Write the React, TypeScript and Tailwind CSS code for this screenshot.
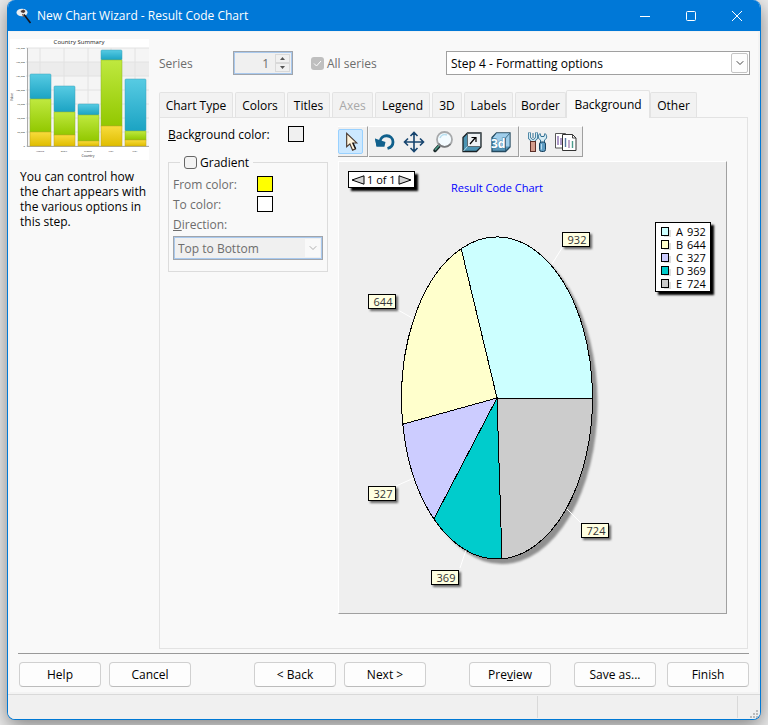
import React from "react";
import { ChevronDown } from "lucide-react";

const slices = [
  { name: "A", value: 932, color: "#ccffff", box: [223, 70], line: [223, 86, 213, 102] },
  { name: "B", value: 644, color: "#ffffcc", box: [29, 132], line: [59, 148, 75, 157] },
  { name: "C", value: 327, color: "#ccccff", box: [29, 324], line: [57, 324, 75, 316] },
  { name: "D", value: 369, color: "#00cccc", box: [92, 408], line: [121, 406, 127, 388] },
  { name: "E", value: 724, color: "#cccccc", box: [242, 361], line: [242, 361, 228, 347] },
];

const CX = 158;
const CY = 236;
const RX = 95.5;
const RY = 161;

function Pie() {
  const total = slices.reduce((sum, s) => sum + s.value, 0);
  const at = (n: number) => {
    const a = (n / total) * Math.PI * 2;
    return `${(CX + RX * Math.cos(a)).toFixed(1)} ${(CY - RY * Math.sin(a)).toFixed(1)}`;
  };
  let run = 0;
  return (
    <svg viewBox="0 0 387 451" className="block h-full w-full" role="img" aria-label="Result Code Chart">
      <defs>
        <filter id="soft" x="-20%" y="-20%" width="150%" height="150%">
          <feGaussianBlur stdDeviation="1" />
        </filter>
      </defs>
      <ellipse cx={CX + 5} cy={CY + 5} rx={RX} ry={RY} fill="#909090" filter="url(#soft)" />
      {slices.map((s) => {
        const from = at(run);
        run += s.value;
        return (
          <path
            key={s.name}
            d={`M${CX} ${CY} L${from} A${RX} ${RY} 0 0 0 ${at(run)} Z`}
            fill={s.color}
            stroke="#000"
            strokeWidth="1"
            shapeRendering="crispEdges"
          />
        );
      })}
      {slices.map((s) => (
        <g key={s.name}>
          <line x1={s.line[0]} y1={s.line[1]} x2={s.line[2]} y2={s.line[3]} stroke="#fff" />
          <rect x={s.box[0] + 2} y={s.box[1] + 2} width="28" height="15" fill="#666" filter="url(#soft)" />
          <rect x={s.box[0] + 0.5} y={s.box[1] + 0.5} width="27" height="14" fill="#ffffe1" stroke="#000" />
          <text x={s.box[0] + 15} y={s.box[1] + 12} textAnchor="middle" fontSize="11" fill="#333">
            {s.value}
          </text>
        </g>
      ))}
    </svg>
  );
}

const previewBars = [
  { x: 30, top: 35, mid: 60, low: 93, label: "Austria" },
  { x: 54, top: 47, mid: 73, low: 96, label: "Brazil" },
  { x: 78, top: 65, mid: 76, low: 102, label: "France" },
  { x: 101, top: 11, mid: 21, low: 87, label: "Italy" },
  { x: 125, top: 40, mid: 92, low: 101, label: "USA" },
];
const previewTicks = ["175,000", "150,000", "125,000", "100,000", "75,000", "50,000", "25,000", "0"];

function Preview() {
  return (
    <svg viewBox="0 0 139 121" className="block h-[121px] w-[139px]" role="img" aria-label="Country Summary">
      <defs>
        <linearGradient id="blue" x2="0" y2="1"><stop stopColor="#57cbe3" /><stop offset="1" stopColor="#1ba3c3" /></linearGradient>
        <linearGradient id="green" x2="0" y2="1"><stop stopColor="#bfe93f" /><stop offset="1" stopColor="#92c800" /></linearGradient>
        <linearGradient id="gold" x2="0" y2="1"><stop stopColor="#f8dc3c" /><stop offset="1" stopColor="#dfbd00" /></linearGradient>
      </defs>
      <rect width="139" height="121" fill="#fff" />
      <rect x="18" y="9" width="121" height="98" fill="#f5f5f5" />
      <rect x="18" y="23" width="121" height="14" fill="#ececec" />
      {previewTicks.map((t, i) => (
        <g key={t}>
          <line x1="16" x2="139" y1={9 + i * 14} y2={9 + i * 14} stroke="#e2e2e2" />
          <text x="15" y={10 + i * 14} fontSize="2.5" textAnchor="end" fill="#222">{t}</text>
        </g>
      ))}
      {previewBars.map((b) => (
        <line key={b.label} x1={b.x} x2={b.x} y1="9" y2="107" stroke="#e2e2e2" />
      ))}
      <line x1="17.5" x2="17.5" y1="9" y2="108" stroke="#aaa" />
      <line x1="17" x2="139" y1="107.5" y2="107.5" stroke="#aaa" />
      {previewBars.map((b) => (
        <g key={b.label}>
          <rect x={b.x - 10} y={b.top} width="21" height={b.mid - b.top} rx="1" fill="url(#blue)" stroke="#3fa3b8" strokeWidth=".5" />
          <rect x={b.x - 10} y={b.mid} width="21" height={b.low - b.mid} fill="url(#green)" stroke="#8eb52a" strokeWidth=".5" />
          <rect x={b.x - 10} y={b.low} width="21" height={107 - b.low} fill="url(#gold)" stroke="#c0a31a" strokeWidth=".5" />
          <text x={b.x} y="113" fontSize="2.5" textAnchor="middle" fill="#222">{b.label}</text>
        </g>
      ))}
      <text x="69" y="5" fontSize="6" textAnchor="middle" fill="#222">Country Summary</text>
      <text x="78" y="118" fontSize="3.5" textAnchor="middle" fill="#222">Country</text>
      <text transform="translate(3 58) rotate(-90)" fontSize="3" textAnchor="middle" fill="#222">Value</text>
    </svg>
  );
}

const icon = "block size-6";

const PointerIcon = () => (
  <svg viewBox="0 0 24 24" className={icon}>
    <path d="M8 3v14l3.400-3 2.800 6.500 3-1.300-2.900-6.200h4.200z" fill="#fff4dc" stroke="#4a3a30" strokeWidth="1.200" />
    <path d="M14.600 13l2.800 6" stroke="#111" strokeWidth="1.300" />
  </svg>
);
const RotateIcon = () => (
  <svg viewBox="0 0 24 24" className={icon}>
    <path d="M7 11.500C8 3.500 20 4 20 12c0 3.500-2 5.500-5.500 6.500" fill="none" stroke="#10608c" strokeWidth="2.800" />
    <path d="M2 8.500l1.500 8h8z" fill="#10608c" />
    <path d="M2 8.500l10.500 3.500-1 4.500h-8z" fill="#10608c" />
  </svg>
);
const MoveIcon = () => (
  <svg viewBox="0 0 24 24" className={icon} fill="none" stroke="#17456f" strokeWidth="1.600">
    <path d="M12 3v18M3 12h18M8.500 6L12 2.500 15.500 6M8.500 18l3.500 3.500 3.500-3.500M6 8.500L2.500 12 6 15.500M18 8.500l3.500 3.500-3.500 3.500" />
  </svg>
);
const ZoomIcon = () => (
  <svg viewBox="0 0 24 24" className={icon}>
    <path d="M9 15l-5 5.500" stroke="#1c2b2b" strokeWidth="3.500" strokeLinecap="round" />
    <path d="M8.500 15L4 20" stroke="#4fa08c" strokeWidth="1.400" />
    <circle cx="13.500" cy="9.500" r="7.500" fill="#f3fbff" stroke="#a7a9ab" strokeWidth="1.800" />
    <path d="M7.500 13.500a7.500 7.500 0 0 0 12 .5" fill="none" stroke="#77797b" strokeWidth="1.600" />
    <path d="M9 8a5 5 0 0 1 7-3" fill="none" stroke="#b8dff0" strokeWidth="1.500" />
  </svg>
);
const DepthIcon = () => (
  <svg viewBox="0 0 24 24" className={icon}>
    <path d="M3 7.500L7.500 3h13.500v14l-4.500 4.500H3z" fill="#4c94b3" stroke="#1a2226" strokeWidth="1.300" />
    <path d="M7.500 3.500h13v13h-13z" fill="#eef2f4" stroke="#4a5358" strokeWidth=".8" />
    <path d="M3.500 21l4-4.500" stroke="#b5dcec" />
    <path d="M10 14l5.500-6.500M11.500 7.500h4.500V12" fill="none" stroke="#000" strokeWidth="1.200" />
  </svg>
);
const ThreeDIcon = () => (
  <svg viewBox="0 0 24 24" className={icon}>
    <path d="M3 7.500L7.500 3h13.500v14l-4.500 4.500H3z" fill="#5695b8" stroke="#264b60" strokeWidth="1.300" />
    <path d="M7.500 3.500h13L16.500 8H4z" fill="#a5d3ee" />
    <path d="M7.500 3.500h13v13h-13z" fill="#9fcdea" />
    <path d="M16.500 8v13M16.500 8l4-4.500" fill="none" stroke="#2a5670" strokeWidth=".8" />
    <text x="2" y="18" fontSize="12" fontWeight="700" fill="#fff" stroke="#3f7fa3" strokeWidth="1" paintOrder="stroke">3d</text>
  </svg>
);
const ToolsIcon = () => (
  <svg viewBox="0 0 24 24" className={icon}>
    <path d="M4.500 2.500v5.500L7 10.500h2L11.500 8V2.500" fill="none" stroke="#2f6f93" strokeWidth="3" />
    <path d="M4.500 3v5L7 10.500h2L11.500 8V3" fill="none" stroke="#d3ecf6" strokeWidth="1.400" />
    <path d="M8 3v5" stroke="#2f6f93" />
    <rect x="5.500" y="11.500" width="5" height="10" fill="#d39c8c" stroke="#5b2e27" />
    <path d="M15 3.500l1 3h3l1-3c2.500 2 2 5.500-.5 6.500v3h-4v-3c-2.500-1-3-4.500-.5-6.500z" fill="#d6ecf4" stroke="#2f6f93" />
    <rect x="14.500" y="12" width="6" height="9.500" rx="2" fill="#5e9cc2" stroke="#173f5b" />
    <path d="M16.500 14v5.500" stroke="#b9dcee" />
  </svg>
);
const PagesIcon = () => (
  <svg viewBox="0 0 24 24" className={icon}>
    <path d="M1.500 3.500h10V18h-10z" fill="#fff" stroke="#444" strokeWidth=".9" />
    <path d="M4 6v9M7 8v7" stroke="#8b6fb0" strokeWidth="1.400" />
    <path d="M8.500 4.500h10L22 8v12.500H8.500z" fill="#fff" stroke="#333" />
    <path d="M18.500 4.500V8H22" fill="none" stroke="#333" strokeWidth=".9" />
    <path d="M11.500 8v9" stroke="#5577a0" strokeWidth="1.400" />
    <path d="M15 10v8" stroke="#a585b5" strokeWidth="1.400" />
    <path d="M18.500 11v7" stroke="#4b9d8c" strokeWidth="1.400" />
  </svg>
);

const toolGroups = [
  [{ name: "Select", Icon: PointerIcon, width: "w-[25px]", on: true }],
  [
    { name: "Rotate", Icon: RotateIcon, width: "w-[29px]" },
    { name: "Move", Icon: MoveIcon, width: "w-[29px]" },
    { name: "Zoom", Icon: ZoomIcon, width: "w-[29px]" },
    { name: "Depth", Icon: DepthIcon, width: "w-[29px]" },
    { name: "3D view", Icon: ThreeDIcon, width: "w-[29px]" },
  ],
  [
    { name: "Settings", Icon: ToolsIcon, width: "w-[29px]" },
    { name: "Copy", Icon: PagesIcon, width: "w-[29px]" },
  ],
] as { name: string; Icon: () => React.ReactElement; width: string; on?: boolean }[][];

const groupPad = ["pr-1", "px-px pr-[3px]", "px-[2px]"];

const tabs = [
  { label: "Chart Type", width: "w-[74px] mr-[2px]" },
  { label: "Colors", width: "w-[50px] mr-[2px]" },
  { label: "Titles", width: "w-[43px] mr-[2px]" },
  { label: "Axes", width: "w-[41px] mr-[2px]", disabled: true },
  { label: "Legend", width: "w-[55px] mr-[2px]" },
  { label: "3D", width: "w-[30px] mr-[2px]" },
  { label: "Labels", width: "w-[49px] mr-[2px]" },
  { label: "Border", width: "w-[51px]" },
  { label: "Background", width: "w-[84px]", active: true },
  { label: "Other", width: "w-[47px]" },
];

function PushButton({ children, className = "" }: { children: React.ReactNode; className?: string }) {
  return (
    <button className={`h-[25px] w-[82px] shrink-0 rounded border border-[#d0d0d0] border-b-[#bcbcbc] bg-[#fdfdfd] text-center ${className}`}>
      {children}
    </button>
  );
}

function NavArrow({ left }: { left?: boolean }) {
  return (
    <button aria-label={left ? "Previous page" : "Next page"}>
      <svg viewBox="0 0 14 10" className="block h-[10px] w-[14px]">
        <path d={left ? "M1 5L13 .8v8.400z" : "M13 5L1 .8v8.400z"} fill="#d4d4d4" stroke="#000" />
      </svg>
    </button>
  );
}

export default function App() {
  return (
    <div className="flex min-h-screen flex-col overflow-hidden bg-[#ececec] px-[7px] pb-[7px] font-['Open_Sans','Noto_Sans',sans-serif] text-[12px] leading-[15px] text-black">
      <div className="flex flex-1 flex-col overflow-hidden rounded-lg border border-t-0 border-[#0078d4] bg-[#f9f9f9] shadow-[0_6px_20px_rgba(0,0,0,0.45)]">
        <header className="flex h-[31px] shrink-0 items-center bg-[#0078d7] pl-2 text-white">
          <svg viewBox="0 0 16 16" className="size-4">
            <ellipse cx="6" cy="4.500" rx="5.500" ry="3.800" fill="#e9eef2" />
            <path d="M4.500 3l3-1.500L9.500 3 8 5 5.500 4.500z" fill="#493530" />
            <path d="M8 6.500l6.500 8.500" stroke="#15151d" strokeWidth="1.600" />
            <path d="M6.500 6l1.500 3" stroke="#7a5a4c" strokeWidth="1.400" />
          </svg>
          <h1 className="ml-[5px] flex-1">New Chart Wizard - Result Code Chart</h1>
          <button aria-label="Minimize" className="flex w-[46px] justify-center">
            <svg viewBox="0 0 10 10" className="size-[10px]" stroke="#fff"><path d="M0 5.500h10" /></svg>
          </button>
          <button aria-label="Maximize" className="flex w-[46px] justify-center">
            <svg viewBox="0 0 10 10" className="size-[10px]" stroke="#fff" fill="none"><rect x=".5" y=".5" width="9" height="9" rx="1" /></svg>
          </button>
          <button aria-label="Close" className="flex w-[46px] justify-center">
            <svg viewBox="0 0 10 10" className="size-[10px]" stroke="#fff"><path d="M0 0l10 10M10 0L0 10" /></svg>
          </button>
        </header>

        <div className="flex flex-1 flex-col border-2 border-t border-[#f3f3f3]">
          <main className="flex flex-1">
            <aside className="w-[149px] shrink-0 pt-[7px]">
              <Preview />
              <p className="w-[138px] pt-[9px] pl-[10px]">You can control how the chart appears with the various options in this step.</p>
            </aside>

            <div className="flex min-w-0 flex-1 flex-col pr-2">
              <div className="flex h-[62px] shrink-0 items-center text-[#6d6d6d]">
                <label htmlFor="series" className="w-[74px]">Series</label>
                <div className="flex h-6 w-[60px] items-center border border-[#a0a5ac] bg-[#f0f0f0] p-px outline-1 -outline-offset-2 outline-[#a9c9ee]">
                  <input id="series" defaultValue="1" disabled className="w-0 flex-1 bg-transparent pr-[6px] text-right" />
                  <div className="mr-px flex flex-col">
                    <button disabled aria-label="Increase" className="flex h-[9px] w-[15px] items-center justify-center border border-[#d9d9d9]">
                      <svg viewBox="0 0 5 3" className="h-[3px] w-[5px]"><path d="M0 3L2.500 0 5 3z" fill="#555" /></svg>
                    </button>
                    <button disabled aria-label="Decrease" className="flex h-[9px] w-[15px] items-center justify-center border border-[#d9d9d9]">
                      <svg viewBox="0 0 5 3" className="h-[3px] w-[5px]"><path d="M0 0l2.500 3L5 0z" fill="#555" /></svg>
                    </button>
                  </div>
                </div>
                <label className="ml-[18px] flex items-center gap-[3px]">
                  <span className="relative block size-[13px]">
                    <input type="checkbox" checked disabled readOnly className="block size-[13px] appearance-none rounded-[3px] bg-[#bfbfbf]" />
                    <svg viewBox="0 0 13 13" className="pointer-events-none absolute inset-0" fill="none" stroke="#fff"><path d="M3 6.500L5.500 9 10 4" /></svg>
                  </span>
                  All series
                </label>
                <div className="relative ml-auto w-[304px] text-black">
                  <select aria-label="Wizard step" className="block h-6 w-full appearance-none border border-[#a0a0a0] bg-white pl-1">
                    <option>Step 4 - Formatting options</option>
                  </select>
                  <span className="pointer-events-none absolute top-[2px] right-[2px] flex h-5 w-[17px] items-center justify-center rounded-xs border border-[#c4c4c4] bg-[#fdfdfd]">
                    <ChevronDown className="size-3 text-[#444]" strokeWidth={2} />
                  </span>
                </div>
              </div>

              <div role="tablist" className="flex h-[23px] shrink-0 items-end">
                {tabs.map((t) => (
                  <button
                    key={t.label}
                    role="tab"
                    aria-selected={!!t.active}
                    disabled={t.disabled}
                    className={`shrink-0 rounded-t-xs border border-b-0 border-[#e3e3e3] text-center ${t.width} ${
                      t.active ? "relative -mb-px h-7 bg-[#f9f9f9]" : "h-[25px] bg-[#f2f2f2]"
                    } ${t.disabled ? "text-[#a8a8a8]" : ""}`}
                  >
                    {t.label}
                  </button>
                ))}
              </div>

              <section role="tabpanel" className="mr-[2px] mb-1 flex flex-1 border border-[#e3e3e3] pt-2 pr-5 pb-[34px] pl-2">
                <div className="w-[170px] shrink-0">
                  <div className="flex h-4 items-center">
                    <span className="w-[120px]"><u>B</u>ackground color:</span>
                    <button aria-label="Background color" className="size-4 border border-black bg-[#f0f0f0]" />
                  </div>
                  <fieldset className="mt-[13px] h-[117px] w-40 border border-[#dcdcdc] pl-1">
                    <legend className="ml-[7px] px-1">
                      <label className="flex h-[15px] items-center gap-[3px]">
                        <input type="checkbox" className="size-[13px] appearance-none rounded-[3px] border border-[#666] bg-[#f3f3f3]" />
                        Gradient
                      </label>
                    </legend>
                    <div className="pt-1 text-[#6d6d6d]">
                      <div className="flex h-5 items-center">
                        <span className="w-[84px]">From color:</span>
                        <button disabled aria-label="From color" className="size-4 border border-black bg-[#ffff00]" />
                      </div>
                      <div className="flex h-5 items-center">
                        <span className="w-[84px]">To color:</span>
                        <button disabled aria-label="To color" className="size-4 border border-black bg-white" />
                      </div>
                      <label htmlFor="direction" className="flex h-5 items-center"><span><u>D</u>irection:</span></label>
                      <div className="relative mt-[2px] w-[150px]">
                        <select id="direction" disabled className="block h-6 w-full appearance-none border border-[#a0a5ac] bg-[#f0f0f0] pl-1 text-[#6d6d6d] opacity-100 outline-1 -outline-offset-2 outline-[#a9c9ee]">
                          <option>Top to Bottom</option>
                        </select>
                        <span className="pointer-events-none absolute top-[2px] right-[2px] flex h-5 w-[17px] items-center justify-center border border-[#f0f0f0] bg-[#f9f9f9]">
                          <ChevronDown className="size-3 text-[#b0b0b0]" />
                        </span>
                      </div>
                    </div>
                  </fieldset>
                </div>

                <div className="flex min-w-0 flex-1 flex-col">
                  <div className="flex h-[31px] shrink-0">
                    {toolGroups.map((group, i) => (
                      <div key={i} className={`mr-px flex items-center border-t border-r border-b border-t-white border-r-[#a0a0a0] border-b-[#a0a0a0] bg-[#f0f0f0] ${groupPad[i]}`}>
                        {group.map(({ name, Icon, width, on }) => (
                          <button key={name} aria-label={name} className={`flex h-[25px] items-center justify-center ${width} ${on ? "rounded-xs border border-[#99d1ff] bg-[#cce8ff]" : ""}`}>
                            <Icon />
                          </button>
                        ))}
                      </div>
                    ))}
                  </div>

                  <div className="relative mt-1 flex-1 border border-t-white border-r-[#a0a0a0] border-b-[#a0a0a0] border-l-white bg-[#efefef]">
                    <Pie />
                    <div className="absolute top-5 left-[110px] w-24 text-center text-[11px] leading-[12px] whitespace-nowrap text-[#0000ff]">
                      Result Code Chart
                    </div>
                    <nav className="absolute top-[9px] left-[9px] flex h-[17px] items-center gap-[2px] border border-black bg-white px-[2px] text-[11px] leading-[15px] shadow-[3px_3px_2px_#000]">
                      <NavArrow left />
                      1 of 1
                      <NavArrow />
                    </nav>
                    <ul className="absolute top-[60px] right-[15px] w-[56px] border border-black bg-white pt-[2px] pb-px pl-[5px] text-[11px] leading-[13px] shadow-[3px_3px_2px_#000]">
                      {slices.map((s) => (
                        <li key={s.name} className="flex items-center">
                          <svg viewBox="0 0 11 11" className="mr-1 size-[11px]">
                            <rect x="3" y="4" width="7" height="7" fill="#ddd" />
                            <rect x=".5" y="1.500" width="7" height="8" fill={s.color} stroke="#000" />
                          </svg>
                          <span className="w-[11px]">{s.name}</span>
                          <span>{s.value}</span>
                        </li>
                      ))}
                    </ul>
                  </div>
                </div>
              </section>
            </div>
          </main>

          <footer className="mr-[9px] ml-2 flex h-[39px] shrink-0 items-start border-t border-[#999] pt-2 pl-px">
            <PushButton>Help</PushButton>
            <PushButton className="ml-2">Cancel</PushButton>
            <PushButton className="ml-auto">&lt; Back</PushButton>
            <PushButton className="ml-2">Next &gt;</PushButton>
            <PushButton className="ml-[43px]">Pre<u>v</u>iew</PushButton>
            <PushButton className="ml-[23px]">Save as...</PushButton>
            <PushButton className="ml-[11px]">Finish</PushButton>
          </footer>
        </div>

        <div role="status" className="flex h-[25px] shrink-0 items-stretch border-t border-[#d9d9d9] bg-[#f0f0f0] py-px">
          <div className="flex-1 border-r border-[#d9d9d9]" />
          <div className="w-[200px] border-r border-[#d9d9d9]" />
          <div className="flex w-[22px] items-end justify-end pr-[2px]">
            <svg viewBox="0 0 8 8" className="size-2" fill="#bbb">
              <path d="M6 0h2v2H6zM3 3h2v2H3zM6 3h2v2H6zM0 6h2v2H0zM3 6h2v2H3zM6 6h2v2H6z" />
            </svg>
          </div>
        </div>
      </div>
    </div>
  );
}
